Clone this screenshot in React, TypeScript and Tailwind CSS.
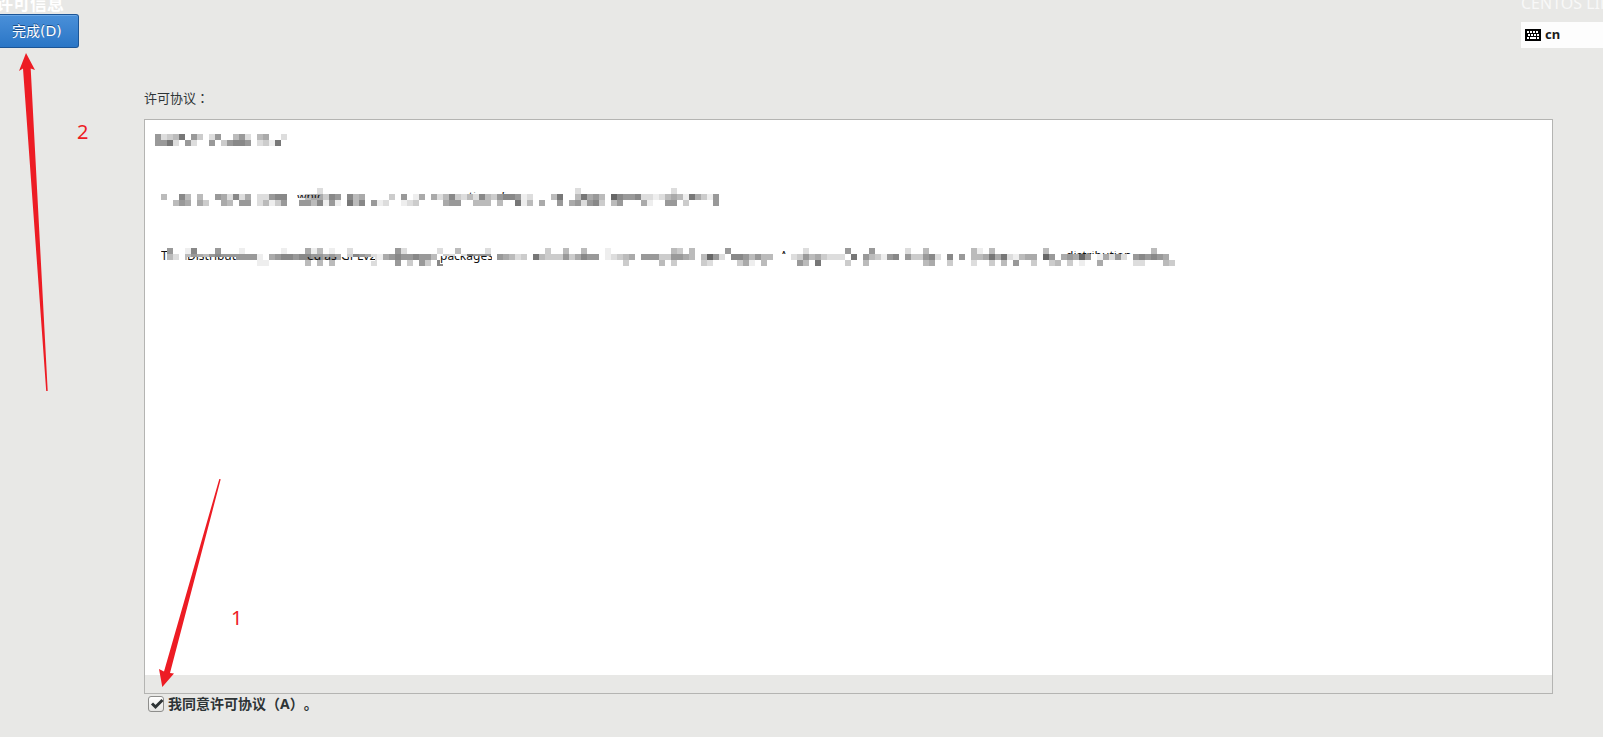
import React from 'react';

const CELL = 6;

// one hex digit per cell (grey level), a dot leaves the cell empty
const mosaic = [
  { y: 0, cells: '9dcb7.9c.d9..b9d.ba..d' },
  { y: 6, cells: '997d.9d..9.c9889.dce7' },
  { y: 54, cells: '...........................d..........................................d...............d' },
  {
    y: 60,
    cells:
      '.b..8b.b..9ad8da.dd988..ebaac89' +
      '.8ba....c.9.ea.adb8cdbd8bc9889e' +
      'd...b7..b7a9b.68998ddedbabe7ace9',
  },
  {
    y: 66,
    cells:
      '...b9a.ac..ab.99.dbec9..99b8e9e' +
      '.7b8.9ed..edc....a99..bbb.b..7e' +
      'b.a..9.a9d98c.b9...ae..99.c....9',
  },
  {
    y: 114,
    cells:
      '..9..e8...9...e......e...aeb.e.' +
      '.d.......9d.....d..b....d......' +
      '...c..b..b...e..........bc.b....' +
      '.9............d......9...9.....d..b.....' +
      '..be.b........b.................b...',
  },
  {
    y: 120,
    cells:
      '.9bd.b9ab98999999e.a98898899a9a' +
      '.c89adea9899899b.cd.d7999.9abdc' +
      '.7bccc9ca899.edcba.999cc99ab.b69' +
      'd.889b9bb...dc9bacddd.7.9bce98.9cc98d.8.' +
      '9.bba7a7debaa.69.a9a69.ead9d.98989a',
  },
  {
    y: 126,
    cells:
      '.................ee......b.b.b.' +
      '.....d...9.c.9c.8..............' +
      '................c.....b.c....cd.' +
      '...cae.b.....9b.7....c..b.........ba..c.' +
      '..d..c.b.9..c..cb.c.e..a.....dd...bc',
  },
];

// slices of the licence text that the mosaic leaves readable
const slices = [
  { text: 'T', x: 6, top: 116, width: 6, height: 11, baseline: 126, paper: '#fff' },
  { text: 'Distribut', x: 32, top: 123, width: 49, height: 4, baseline: 126, paper: '#fff' },
  { text: 'ed as', x: 152, top: 123, width: 30, height: 4, baseline: 126, paper: 'none' },
  { text: 'GPLv2', x: 186, top: 123, width: 34, height: 4, baseline: 126, paper: '#fff' },
  { text: 'packages', x: 285, top: 122, width: 52, height: 8, baseline: 126, paper: '#fff' },
  { text: 'A', x: 625, top: 116, width: 9, height: 4, baseline: 126, paper: 'none' },
  { text: 'distribution', x: 911, top: 117, width: 68, height: 3, baseline: 126, paper: 'none' },
  { text: 'which', x: 142, top: 61, width: 24, height: 3, baseline: 67, paper: 'none' },
  { text: 'ction of', x: 308, top: 58, width: 48, height: 2, baseline: 67, paper: 'none' },
];

function LicenseText() {
  return (
    <svg
      width="1030"
      height="140"
      className="block max-w-full font-['Noto_Sans',sans-serif] text-[12px]"
      shapeRendering="crispEdges"
    >
      {mosaic.map((row) =>
        row.cells
          .split('')
          .map((c, i) =>
            c === '.' ? null : (
              <rect key={`${row.y}-${i}`} x={i * CELL} y={row.y} width={CELL} height={CELL} fill={`#${c}${c}${c}`} />
            )
          )
      )}
      {slices.map((s) => (
        <svg key={s.text} x={s.x} y={s.top} width={s.width} height={s.height} overflow="hidden">
          <rect width={s.width} height={s.height} fill={s.paper} />
          <text x="0" y={s.baseline - s.top} fill="#111">
            {s.text}
          </text>
        </svg>
      ))}
    </svg>
  );
}

function KeyboardIcon() {
  return (
    <svg width="16" height="12" viewBox="0 0 16 12" shapeRendering="crispEdges">
      <rect width="16" height="12" rx="1" fill="#000" />
      <path
        d="M2 2h2v2H2zM5 2h2v2H5zM8 2h2v2H8zM11 2h2v2h-2zM3 5h2v2H3zM6 5h2v2H6zM9 5h2v2H9zM12 5h2v2h-2zM2 8h2v2H2zM5 8h6v2H5zM12 8h2v2h-2z"
        fill="#fff"
      />
    </svg>
  );
}

function Header() {
  return (
    <header className="flex justify-between">
      <div>
        <div className="flex h-[14px] items-end overflow-hidden">
          <h1 className="-ml-1 text-[17px] font-bold leading-[20px] text-white">许可信息</h1>
        </div>
        <button className="h-[34px] w-[79px] rounded-r-[3px] border border-l-0 border-[#1c5596] bg-gradient-to-b from-[#4a90d9] to-[#2a76c6] pl-3 text-left font-['DejaVu_Sans','Noto_Sans_CJK_SC',sans-serif] text-[14px] leading-[20px] text-white shadow-[inset_0_1px_0_#6ba8e6] [text-shadow:0_-1px_0_#1c4f8a]">
          完成(D)
        </button>
      </div>
      <div className="w-[82px] overflow-hidden">
        <div className="flex h-[22px] items-start overflow-hidden">
          <p className="-mt-2 whitespace-nowrap text-[16px] leading-[22px] text-[#f8f8f8]">CENTOS LINUX 7</p>
        </div>
        <button className="flex h-[26px] w-full items-center gap-1 bg-[#fdfdfd] pl-1 text-[13px] font-bold text-[#1a1a1a]">
          <KeyboardIcon />
          cn
        </button>
      </div>
    </header>
  );
}

function Annotations() {
  return (
    <div className="pointer-events-none absolute left-0 top-0 text-[20px] leading-[20px] text-[#ed1c24]">
      <svg width="240" height="700" viewBox="0 0 240 700" fill="#ed1c24">
        <path d="M26 53L35 70L30.7 68.5L47.7 391H46.2L23 68.5L19 71Z" />
        <path d="M162.3 687L159 669L164 671.5L219.3 479L220.7 479.3L170 673L174 673.5Z" />
      </svg>
      <span className="absolute left-[77px] top-[122px]">2</span>
      <span className="absolute left-[231px] top-[608px]">1</span>
    </div>
  );
}

export default function App() {
  return (
    <div className="relative min-h-screen overflow-hidden bg-[#e8e8e6] font-['Noto_Sans','Noto_Sans_CJK_SC',sans-serif] text-[#2e3436] [text-spacing-trim:space-all]">
      <Header />

      <main className="ml-[144px] mr-[50px] pt-10">
        <h2
          id="license-title"
          lang="zh-TW"
          className="h-[31px] font-['Noto_Sans_CJK_TC',sans-serif] text-[13px] leading-[20px]"
        >
          许可协议：
        </h2>
        <section aria-labelledby="license-title" className="border border-[#b4b4b2]">
          <div className="h-[555px] bg-white pl-[10px] pt-[14px]">
            <LicenseText />
          </div>
          <div className="h-[18px]" />
        </section>

        <label className="flex items-center gap-1 pl-1 text-[14px] font-bold leading-[20px]">
          <span className="relative flex h-4 w-4">
            <input
              type="checkbox"
              defaultChecked
              className="peer h-4 w-4 appearance-none rounded-[3px] border border-[#8e8e8c] bg-gradient-to-b from-white to-[#e4e4e2]"
            />
            <svg
              viewBox="0 0 16 16"
              className="pointer-events-none absolute inset-0 hidden h-4 w-4 peer-checked:block"
              fill="none"
              stroke="#2e3436"
              strokeWidth="3"
            >
              <path d="M4 7.5L7.5 11L14.5 4" />
            </svg>
          </span>
          我同意许可协议（A）。
        </label>
      </main>

      <Annotations />
    </div>
  );
}
